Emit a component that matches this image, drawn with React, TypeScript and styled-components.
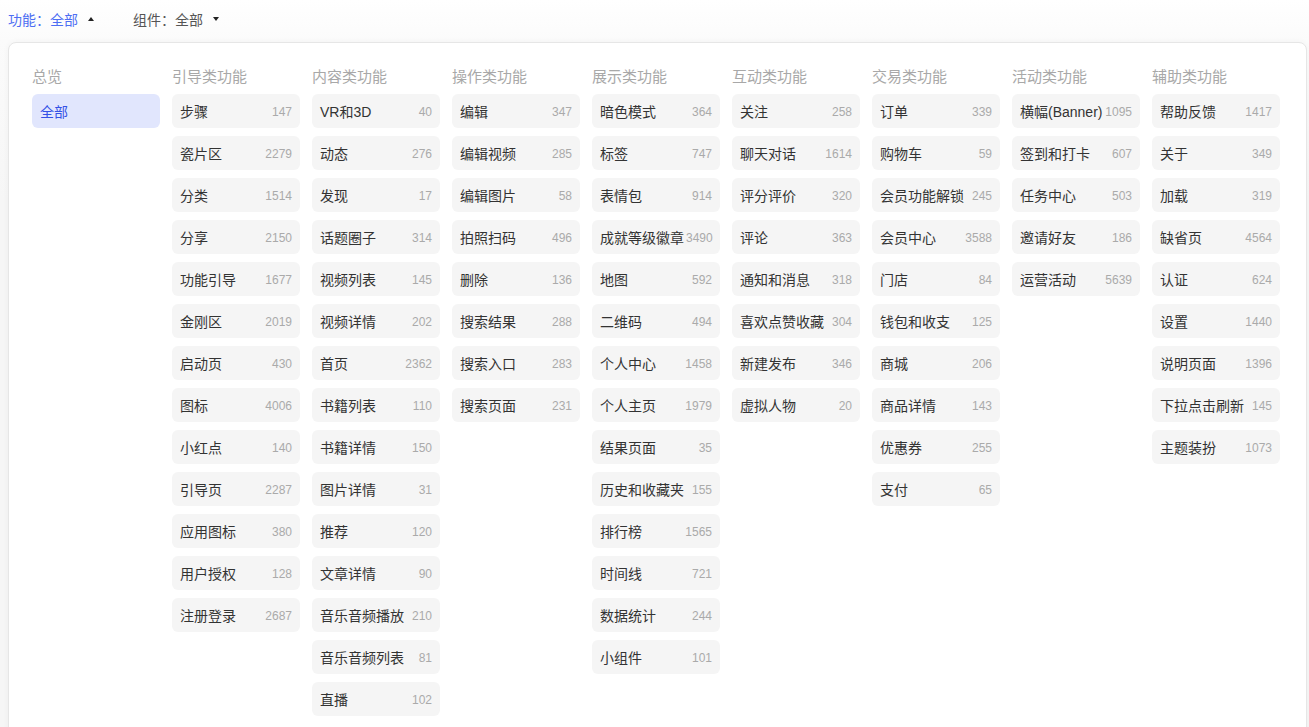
import React from "react";
import styled, { createGlobalStyle } from "styled-components";

const Global = createGlobalStyle`
  html, body { margin: 0; padding: 0; }
  body {
    background: #f6f6f6;
    font-family: "Liberation Sans", "Noto Sans CJK SC", sans-serif;
    color: #333;
    overflow: hidden;
  }
`;

const Page = styled.div`
  min-height: 727px;
  background: linear-gradient(#ffffff 0px, #fbfbfb 40px, #f6f6f6 200px);
`;

const TopBar = styled.div`
  height: 42px;
  display: flex;
  align-items: center;
  gap: 39px;
  padding-left: 8px;
  box-sizing: border-box;
  padding-bottom: 4px;
`;

const Filter = styled.div<{ $active?: boolean }>`
  display: inline-flex;
  align-items: center;
  gap: 10px;
  font-size: 14px;
  color: ${(p) => (p.$active ? "#4d6ef3" : "#555")};
  cursor: pointer;
`;

const Caret = styled.span<{ $up?: boolean }>`
  width: 0;
  height: 0;
  border-left: 3.5px solid transparent;
  border-right: 3.5px solid transparent;
  ${(p) =>
    p.$up ? "border-bottom: 4px solid #222;" : "border-top: 4px solid #222;"}
`;

const Panel = styled.div`
  margin-left: 8px;
  width: 1299px;
  box-sizing: border-box;
  background: #fff;
  border: 1px solid #e6e6e6;
  border-radius: 8px;
  box-shadow: 0 0 6px rgba(0, 0, 0, 0.04);
  padding: 24px 0 24px 23px;
  display: flex;
  gap: 12px;
  align-items: flex-start;
`;

const Column = styled.div`
  width: 128px;
  display: flex;
  flex-direction: column;
`;

const Heading = styled.div`
  font-size: 15px;
  line-height: 20px;
  height: 20px;
  color: #a8a8a8;
  margin-bottom: 7px;
  white-space: nowrap;
`;

const List = styled.div`
  display: flex;
  flex-direction: column;
  gap: 8px;
`;

const Item = styled.div<{ $active?: boolean }>`
  height: 34px;
  border-radius: 6px;
  box-sizing: border-box;
  padding: 0 8px;
  display: flex;
  align-items: center;
  justify-content: space-between;
  background: ${(p) => (p.$active ? "#e1e6fd" : "#f5f5f5")};
  color: ${(p) => (p.$active ? "#3451e6" : "#333")};
  font-size: 14px;
  white-space: nowrap;
  cursor: pointer;
`;

const Label = styled.span`
  font-family: "Liberation Sans", "Noto Sans CJK SC", sans-serif;
`;

const Count = styled.span`
  font-family: "Liberation Sans", Arial, sans-serif;
  font-size: 12px;
  color: #aaaaaa;
  margin-left: 2px;
  padding-top: 1px;
`;

type Entry = [string, number?];
type Group = { title: string; items: Entry[] };

const groups: Group[] = [
  { title: "总览", items: [["全部"]] },
  {
    title: "引导类功能",
    items: [
      ["步骤", 147], ["瓷片区", 2279], ["分类", 1514], ["分享", 2150],
      ["功能引导", 1677], ["金刚区", 2019], ["启动页", 430], ["图标", 4006],
      ["小红点", 140], ["引导页", 2287], ["应用图标", 380], ["用户授权", 128],
      ["注册登录", 2687],
    ],
  },
  {
    title: "内容类功能",
    items: [
      ["VR和3D", 40], ["动态", 276], ["发现", 17], ["话题圈子", 314],
      ["视频列表", 145], ["视频详情", 202], ["首页", 2362], ["书籍列表", 110],
      ["书籍详情", 150], ["图片详情", 31], ["推荐", 120], ["文章详情", 90],
      ["音乐音频播放", 210], ["音乐音频列表", 81], ["直播", 102],
    ],
  },
  {
    title: "操作类功能",
    items: [
      ["编辑", 347], ["编辑视频", 285], ["编辑图片", 58], ["拍照扫码", 496],
      ["删除", 136], ["搜索结果", 288], ["搜索入口", 283], ["搜索页面", 231],
    ],
  },
  {
    title: "展示类功能",
    items: [
      ["暗色模式", 364], ["标签", 747], ["表情包", 914], ["成就等级徽章", 3490],
      ["地图", 592], ["二维码", 494], ["个人中心", 1458], ["个人主页", 1979],
      ["结果页面", 35], ["历史和收藏夹", 155], ["排行榜", 1565], ["时间线", 721],
      ["数据统计", 244], ["小组件", 101],
    ],
  },
  {
    title: "互动类功能",
    items: [
      ["关注", 258], ["聊天对话", 1614], ["评分评价", 320], ["评论", 363],
      ["通知和消息", 318], ["喜欢点赞收藏", 304], ["新建发布", 346], ["虚拟人物", 20],
    ],
  },
  {
    title: "交易类功能",
    items: [
      ["订单", 339], ["购物车", 59], ["会员功能解锁", 245], ["会员中心", 3588],
      ["门店", 84], ["钱包和收支", 125], ["商城", 206], ["商品详情", 143],
      ["优惠券", 255], ["支付", 65],
    ],
  },
  {
    title: "活动类功能",
    items: [
      ["横幅(Banner)", 1095], ["签到和打卡", 607], ["任务中心", 503],
      ["邀请好友", 186], ["运营活动", 5639],
    ],
  },
  {
    title: "辅助类功能",
    items: [
      ["帮助反馈", 1417], ["关于", 349], ["加载", 319], ["缺省页", 4564],
      ["认证", 624], ["设置", 1440], ["说明页面", 1396], ["下拉点击刷新", 145],
      ["主题装扮", 1073],
    ],
  },
];

export default function App() {
  return (
    <Page>
      <Global />
      <TopBar>
        <Filter $active>
          功能：全部 <Caret $up />
        </Filter>
        <Filter>
          组件：全部 <Caret />
        </Filter>
      </TopBar>
      <Panel>
        {groups.map((g, gi) => (
          <Column key={g.title}>
            <Heading>{g.title}</Heading>
            <List>
              {g.items.map(([name, count]) => (
                <Item key={name} $active={gi === 0}>
                  <Label>{name}</Label>
                  {count !== undefined && <Count>{count}</Count>}
                </Item>
              ))}
            </List>
          </Column>
        ))}
      </Panel>
    </Page>
  );
}
